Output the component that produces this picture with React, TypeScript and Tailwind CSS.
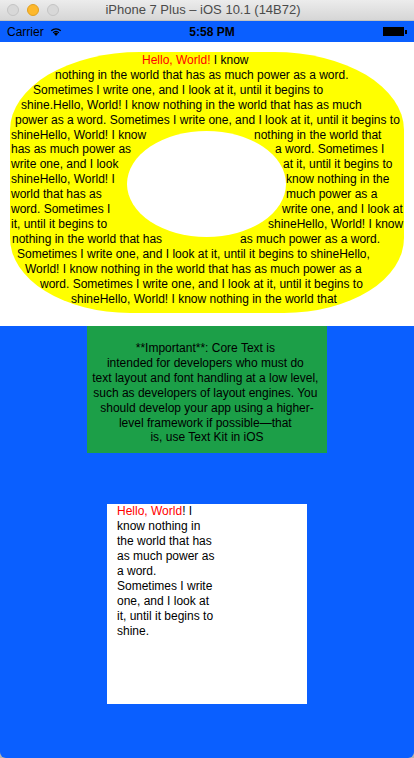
import { Fragment } from "react";

type Line = { pl: string; text: string; split?: { w: string; right: string } };

const shapeLines: Line[] = [
  { pl: "pl-[45px]", text: "nothing in the world that has as much power as a word." },
  { pl: "pl-[23px]", text: "Sometimes I write one, and I look at it, until it begins to" },
  { pl: "pl-[11px]", text: "shine.Hello, World! I know nothing in the world that has as much" },
  { pl: "pl-[5px]", text: "power as a word. Sometimes I write one, and I look at it, until it begins to" },
  { pl: "pl-[1px]", text: "shineHello, World! I know", split: { w: "w-[244px]", right: "nothing in the world that" } },
  { pl: "pl-[1px]", text: "has as much power as", split: { w: "w-[265px]", right: "a word. Sometimes I" } },
  { pl: "pl-[1px]", text: "write one, and I look", split: { w: "w-[273px]", right: "at it, until it begins to" } },
  { pl: "pl-[1px]", text: "shineHello, World! I", split: { w: "w-[276px]", right: "know nothing in the" } },
  { pl: "pl-[1px]", text: "world that has as", split: { w: "w-[276px]", right: "much power as a" } },
  { pl: "pl-[1px]", text: "word. Sometimes I", split: { w: "w-[272px]", right: "write one, and I look at" } },
  { pl: "pl-[1px]", text: "it, until it begins to", split: { w: "w-[258px]", right: "shineHello, World! I know" } },
  { pl: "pl-[2px]", text: "nothing in the world that has", split: { w: "w-[230px]", right: "as much power as a word." } },
  { pl: "pl-[7px]", text: "Sometimes I write one, and I look at it, until it begins to shineHello," },
  { pl: "pl-[15px]", text: "World! I know nothing in the world that has as much power as a" },
  { pl: "pl-[30px]", text: "word. Sometimes I write one, and I look at it, until it begins to" },
  { pl: "pl-[61px]", text: "shineHello, World! I know nothing in the world that" },
];

const noteLines = [
  "**Important**: Core Text is ",
  "intended for developers who must do ",
  "text layout and font handling at a low level, ",
  "such as developers of layout engines. You ",
  "should develop your app using a higher-",
  "level framework if possible\u2014that ",
  "is, use Text Kit in iOS",
];

const boxLines = [
  "know nothing in",
  "the world that has",
  "as much power as",
  "a word.",
  "Sometimes I write",
  "one, and I look at",
  "it, until it begins to",
  "shine.",
];

function Wifi() {
  return (
    <svg width="12" height="9" viewBox="0 0 12 9" className="ml-[6px]">
      <path d="M6 9 L3.9 6.6 A3 3 0 0 1 8.1 6.6 Z" fill="#000" />
      <path d="M2.7 5.3 A4.8 4.8 0 0 1 9.3 5.3 L8.5 6.2 A3.6 3.6 0 0 0 3.5 6.2 Z" fill="#000" />
      <path d="M0.8 3.2 A7.6 7.6 0 0 1 11.2 3.2 L10.3 4.2 A6.3 6.3 0 0 0 1.7 4.2 Z" fill="#000" />
    </svg>
  );
}

export default function App() {
  return (
    <div className="w-[414px] h-[758px] bg-[#b4b4b4] font-['Liberation_Sans',Arial,sans-serif] text-black">
      <div className="h-full flex flex-col rounded-b-[6px] overflow-hidden">
        {/* window title bar */}
        <div className="h-[21px] flex items-center relative bg-gradient-to-b from-[#ececec] to-[#d6d6d6] border-b border-[#c2c2c2]">
          <div className="flex gap-[8px] pl-[7px]">
            <span className="w-[12px] h-[12px] rounded-full bg-[#d8d8d8] border border-[#c4c4c4]" />
            <span className="w-[12px] h-[12px] rounded-full bg-[#fdb82c] border border-[#e1a020]" />
            <span className="w-[12px] h-[12px] rounded-full bg-[#d8d8d8] border border-[#c4c4c4]" />
          </div>
          <div className="flex-1 text-center text-[13px] text-[#4b4b4b] pr-[67px]">
            iPhone 7 Plus – iOS 10.1 (14B72)
          </div>
        </div>

        {/* status bar */}
        <div className="h-[21px] bg-[#0a5fff] flex items-center px-[7px] text-[12px]">
          <div className="flex items-center w-[120px]">
            Carrier
            <Wifi />
          </div>
          <div className="flex-1 text-center font-semibold pl-[10px]">5:58 PM</div>
          <div className="w-[120px] flex justify-end items-center">
            <span className="w-[21px] h-[9px] bg-black" />
            <span className="w-[2px] h-[4px] bg-black ml-[1px]" />
          </div>
        </div>

        {/* text on a shape */}
        <div className="h-[284px] bg-white pt-[10px] px-[10px]">
          <div className="relative h-[261px] bg-[#ffff00] rounded-tl-[130px_78px] rounded-tr-[130px_78px] rounded-bl-[120px_75px] rounded-br-[120px_75px] text-[12px] leading-[14.9px] whitespace-pre pt-[1px]">
            <div className="absolute left-[117px] top-[79px] w-[159px] h-[106px] rounded-[50%] bg-white" />
            <div className="relative">
              <div className="pl-[132px]">
                <span className="text-[#ff0000]">Hello, World!</span> I know
              </div>
              {shapeLines.map((l, i) => (
                <div key={i} className="flex">
                  {l.split ? (
                    <Fragment>
                      <span className={`${l.split.w} ${l.pl} shrink-0`}>{l.text}</span>
                      <span>{l.split.right}</span>
                    </Fragment>
                  ) : (
                    <span className={l.pl}>{l.text}</span>
                  )}
                </div>
              ))}
            </div>
          </div>
        </div>

        {/* blue area */}
        <div className="flex-1 bg-[#0a5fff] flex flex-col items-center">
          <div className="w-[240px] h-[127px] bg-[#1c9f48] pt-[15px] text-[12px] leading-[14.9px] text-center">
            {noteLines.map((t, i) => (
              <div key={i} className="whitespace-pre">{t}</div>
            ))}
          </div>
          <div className="mt-[51px] w-[200px] h-[200px] bg-white pl-[10px] text-[12px] leading-[15px] whitespace-pre">
            <div>
              <span className="text-[#ff0000]">Hello, World</span>! I
            </div>
            {boxLines.map((t, i) => (
              <div key={i}>{t}</div>
            ))}
          </div>
        </div>
      </div>
    </div>
  );
}
